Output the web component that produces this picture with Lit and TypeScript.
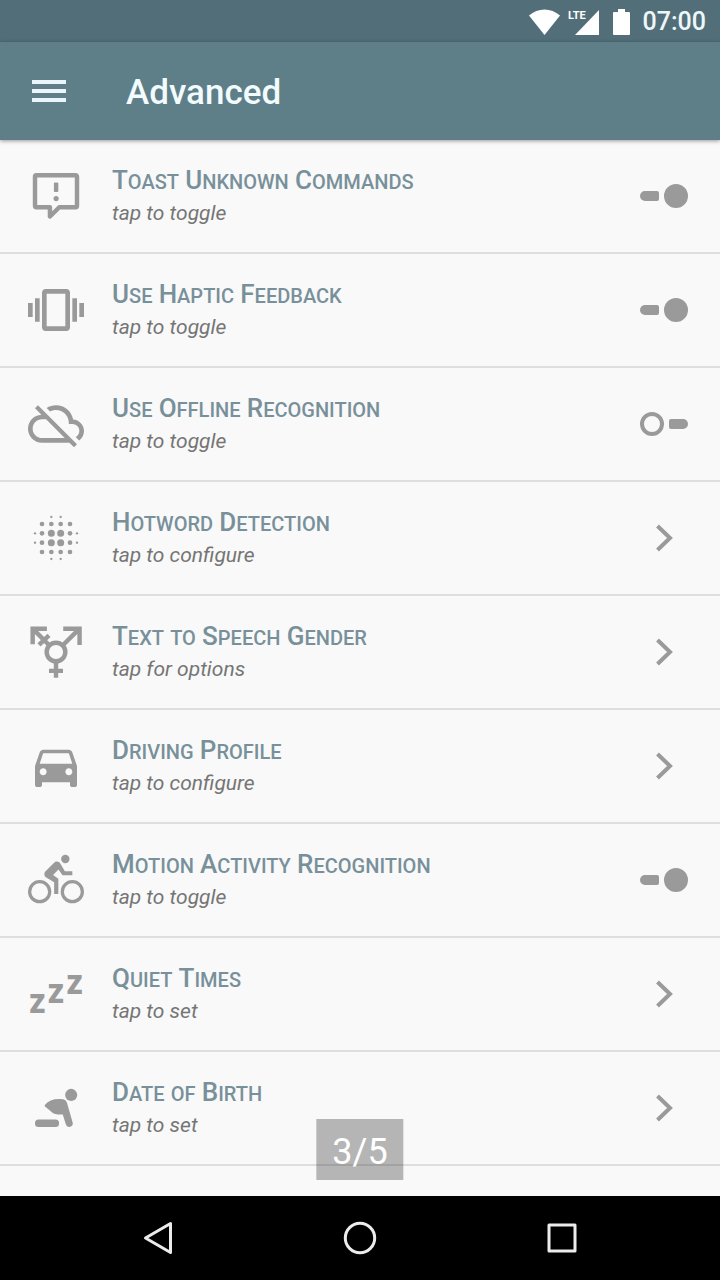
import { LitElement, html, svg, css, nothing } from "lit";
import { customElement, property, state } from "lit/decorators.js";

interface Setting {
  icon: string;
  title: string;
  hint: string;
  on?: boolean;
}

const SETTINGS: Setting[] = [
  { icon: "toast", title: "Toast Unknown Commands", hint: "tap to toggle", on: true },
  { icon: "haptic", title: "Use Haptic Feedback", hint: "tap to toggle", on: true },
  { icon: "offline", title: "Use Offline Recognition", hint: "tap to toggle", on: false },
  { icon: "hotword", title: "Hotword Detection", hint: "tap to configure" },
  { icon: "gender", title: "Text to Speech Gender", hint: "tap for options" },
  { icon: "car", title: "Driving Profile", hint: "tap to configure" },
  { icon: "bike", title: "Motion Activity Recognition", hint: "tap to toggle", on: true },
  { icon: "sleep", title: "Quiet Times", hint: "tap to set" },
  { icon: "baby", title: "Date of Birth", hint: "tap to set" },
];

const dots: [number, number, number][] = [];
for (const x of [6, 10, 14, 18]) {
  for (const y of [6, 10, 14, 18]) {
    const inner = (x === 10 || x === 14) && (y === 10 || y === 14);
    dots.push([x, y, inner ? 1.5 : 1]);
  }
}
for (const a of [10, 14]) {
  for (const b of [3, 21]) {
    dots.push([a, b, 0.5], [b, a, 0.5]);
  }
}

const ICONS: Record<string, unknown> = {
  toast: svg`
    <path fill="none" stroke="currentColor" stroke-width="1.9" stroke-linejoin="round"
      d="M3.6 3.1H20.4a.6.6 0 0 1 .6.6V16.2a.6.6 0 0 1-.6.6H13.4L9.4 20.8V16.8H3.6a.6.6 0 0 1-.6-.6V3.7a.6.6 0 0 1 .6-.6z"/>
    <rect x="11.1" y="6.2" width="1.9" height="4.1" rx=".4"/><circle cx="12.05" cy="13.1" r="1.1"/>`,
  haptic: svg`<path d="M0 15h2V9H0v6zm3 2h2V7H3v10zm19-8v6h2V9h-2zm-3 8h2V7h-2v10zM16.5 3h-9C6.67 3 6 3.67 6 4.5v15c0 .83.67 1.5 1.5 1.5h9c.83 0 1.5-.67 1.5-1.5v-15c0-.83-.67-1.5-1.5-1.5zM16 19H8V5h8v14z"/>`,
  offline: svg`<path d="M19.35 10.04C18.67 6.59 15.64 4 12 4c-1.48 0-2.85.43-4.01 1.17l1.46 1.46C10.21 6.23 11.08 6 12 6c3.04 0 5.5 2.46 5.5 5.5v.5H19c1.66 0 3 1.34 3 3 0 1.13-.64 2.11-1.56 2.62l1.45 1.45C23.16 18.16 24 16.68 24 15c0-2.64-2.05-4.78-4.65-4.96zM3 5.27l2.75 2.74C2.56 8.15 0 10.77 0 14c0 3.31 2.69 6 6 6h11.73l2 2L21 20.73 4.27 4 3 5.27zM7.73 10l8 8H6c-2.21 0-4-1.79-4-4s1.79-4 4-4h1.73z"/>`,
  hotword: dots.map(([x, y, r]) => svg`<circle cx=${x} cy=${y} r=${r}/>`),
  gender: svg`
    <g fill="none" stroke="currentColor" stroke-width="1.9">
      <circle cx="12" cy="12" r="4"/>
      <path d="M8.1 2H2V8.7M2 2L9.2 9.2M9 4.9L4.7 8.9M15.1 2H22.1V9M22.1 2L14.8 9.2M12 16V23M9 20.1H15"/>
    </g>`,
  car: svg`<path d="M18.92 6.01C18.72 5.42 18.16 5 17.5 5h-11c-.66 0-1.21.42-1.42 1.01L3 12v8c0 .55.45 1 1 1h1c.55 0 1-.45 1-1v-1h12v1c0 .55.45 1 1 1h1c.55 0 1-.45 1-1v-8l-2.08-5.99zM6.5 16c-.83 0-1.5-.67-1.5-1.5S5.67 13 6.5 13s1.5.67 1.5 1.5S7.33 16 6.5 16zm11 0c-.83 0-1.5-.67-1.5-1.5s.67-1.5 1.5-1.5 1.5.67 1.5 1.5-.67 1.5-1.5 1.5zM5 11l1.5-4.5h11L19 11H5z"/>`,
  bike: svg`
    <g fill="none" stroke="currentColor" stroke-width="1.4"><circle cx="5" cy="17" r="4.3"/><circle cx="19" cy="17" r="4.3"/></g>
    <path d="M14.8 10H19V8.2H15.8L13.86 4.93C13.57 4.43 13 4.1 12.4 4.1c-.47 0-.9.19-1.2.5L7.5 8.29C7.19 8.6 7 9 7 9.5c0 .63.33 1.16.85 1.47L11.2 13v5H13v-6.5L10.75 9.85 13.07 7.5 14.8 10z"/>
    <circle cx="16" cy="3" r="1.8"/>`,
  sleep: svg`
    <text class="z" x="0.6" y="20">Z</text>
    <text class="z" x="8.6" y="16">Z</text>
    <text class="z" x="16.6" y="12">Z</text>`,
  baby: svg`
    <circle cx="18.5" cy="6.4" r="2.6"/>
    <rect x="3" y="16.9" width="10.3" height="3.2" rx="1.5"/>
    <path d="M7.3 10.6Q9.3 8.1 13.2 8.1C15.4 8.1 16.2 8.3 16.7 9.8L19.1 18.1A1.5 1.5 0 0 1 16.2 19L14.9 14.8H13C11.7 14.8 10.8 14.3 10 13.6L7.3 11.4Q6.9 11 7.3 10.6z"/>`,
};

@customElement("setting-row")
export class SettingRow extends LitElement {
  @property({ attribute: false }) setting!: Setting;
  @state() private checked = false;

  static styles = css`
    :host {
      display: block;
    }
    .row {
      box-sizing: border-box;
      display: flex;
      align-items: center;
      gap: 28px;
      width: 100%;
      min-height: 114px;
      margin: 0;
      padding: 24px 32px 24px 28px;
      border: 0;
      border-bottom: 2px solid #dedede;
      background: none;
      color: #9a9a9a;
      font-family: Roboto, sans-serif;
      text-align: left;
      cursor: pointer;
    }
    .icon {
      flex: none;
      width: 56px;
      height: 56px;
      fill: currentColor;
      overflow: visible;
    }
    .z {
      font-family: "Open Sans", sans-serif;
      font-size: 11px;
      font-weight: 800;
    }
    .text {
      flex: 1;
      min-width: 0;
      display: flex;
      flex-direction: column;
    }
    .title {
      color: #78909a;
      font-size: 25px;
      font-weight: 500;
      line-height: 32px;
      text-transform: uppercase;
    }
    .word {
      font-size: 20px;
      display: inline-block;
    }
    .cap::first-letter {
      font-size: 26px;
    }
    .hint {
      color: #757575;
      font-size: 21px;
      font-style: italic;
      font-weight: 400;
      line-height: 30px;
    }
    .chevron {
      flex: none;
      width: 48px;
      height: 48px;
      fill: none;
      stroke: currentColor;
      stroke-width: 4;
    }
    .switch {
      appearance: none;
      flex: none;
      display: flex;
      align-items: center;
      justify-content: space-between;
      width: 48px;
      height: 24px;
      margin: 0;
      color: inherit;
    }
    .switch::before,
    .switch::after {
      content: "";
      box-sizing: border-box;
      width: 24px;
      height: 24px;
      border: 4px solid currentColor;
      border-radius: 50%;
    }
    .switch::after {
      width: 19px;
      height: 10px;
      border: 0;
      border-radius: 2px 5px 5px 2px;
      background: currentColor;
    }
    .switch:checked {
      flex-direction: row-reverse;
    }
    .switch:checked::before {
      background: currentColor;
    }
    .switch:checked::after {
      border-radius: 5px 2px 2px 5px;
    }
  `;

  willUpdate(changed: Map<string, unknown>) {
    if (changed.has("setting")) this.checked = !!this.setting.on;
  }

  private body() {
    const { icon, title, hint } = this.setting;
    return html`
      <svg class="icon" viewBox="0 0 24 24" aria-hidden="true">${ICONS[icon]}</svg>
      <span class="text">
        <span class="title">${title.split(" ").map(
          (w, i) => html`${i ? " " : nothing}<span class="word ${/^[A-Z]/.test(w) ? "cap" : ""}">${w}</span>`
        )}</span>
        <span class="hint">${hint}</span>
      </span>`;
  }

  render() {
    if (this.setting.on === undefined) {
      return html`<button class="row" type="button">
        ${this.body()}
        <svg class="chevron" viewBox="0 0 48 48" aria-hidden="true"><path d="M17.5 12L30 24L17.5 36"/></svg>
      </button>`;
    }
    return html`<label class="row">
      ${this.body()}
      <input class="switch" type="checkbox" .checked=${this.checked}
        @change=${(e: Event) => (this.checked = (e.target as HTMLInputElement).checked)} />
    </label>`;
  }
}

@customElement("app-root")
export class AppRoot extends LitElement {
  static styles = css`
    :host {
      position: relative;
      display: flex;
      flex-direction: column;
      min-height: 100vh;
      background: #f9f9f9;
      font-family: Roboto, sans-serif;
    }
    .status {
      box-sizing: border-box;
      display: flex;
      align-items: center;
      justify-content: flex-end;
      height: 42px;
      padding: 2px 14px 0;
      background: #526f79;
      color: #eef7f9;
    }
    .status svg {
      height: 26px;
      fill: #fff;
    }
    .wifi {
      width: 31px;
      margin-right: 8px;
    }
    .signal {
      width: 31px;
      margin-right: 14px;
    }
    .battery {
      width: 17px;
      margin-right: 13px;
    }
    .lte {
      font-size: 11px;
      font-weight: 700;
    }
    .time {
      font-size: 25px;
      font-weight: 500;
      line-height: 40px;
    }
    .bar {
      position: relative;
      display: flex;
      align-items: center;
      gap: 60px;
      height: 98px;
      padding: 0 32px;
      background: #5e7e88;
      box-shadow: 0 1px 4px rgba(0, 0, 0, 0.4);
    }
    .menu {
      display: flex;
      flex-direction: column;
      gap: 5px;
      width: 34px;
      margin: 0;
      padding: 0;
      border: 0;
      background: none;
    }
    .line {
      height: 4px;
      background: #eaf6fb;
    }
    .heading {
      margin: 0;
      padding-top: 4px;
      color: #f2fbfd;
      font-size: 35px;
      font-weight: 500;
      line-height: 44px;
    }
    .list {
      flex: 1;
      margin: 0;
      padding: 0;
      list-style: none;
    }
    .nav {
      display: grid;
      grid-template-columns: repeat(3, 1fr);
      height: 84px;
      padding: 0 8%;
      background: #000;
    }
    .key {
      display: grid;
      place-items: center;
      padding: 0;
      border: 0;
      background: none;
    }
    .key svg {
      width: 36px;
      height: 36px;
      fill: none;
      stroke: #ececec;
      stroke-width: 3;
      stroke-linejoin: round;
    }
    .page {
      position: absolute;
      bottom: 100px;
      left: 50%;
      transform: translateX(-50%);
      padding: 11px 16px 5px;
      background: rgba(0, 0, 0, 0.27);
      color: #fff;
      font-size: 36px;
      line-height: 45px;
    }
  `;

  render() {
    return html`
      <div class="status">
        <svg class="wifi" viewBox="0 0 31 26" aria-hidden="true"><path d="M0 6.5C9-1.6 22-1.6 31 6.5L15.5 26z"/></svg>
        <svg class="signal" viewBox="0 0 31 26" aria-label="LTE signal">
          <path d="M31 1V26H7z"/><text class="lte" x="0" y="10">LTE</text>
        </svg>
        <svg class="battery" viewBox="0 0 17 26" aria-hidden="true"><path d="M5 0h7v3h4q1 0 1 1v21q0 1-1 1H1q-1 0-1-1V4q0-1 1-1h4z"/></svg>
        <span class="time">07:00</span>
      </div>
      <header class="bar">
        <button class="menu" type="button" aria-label="Menu">
          <span class="line"></span><span class="line"></span><span class="line"></span>
        </button>
        <h1 class="heading">Advanced</h1>
      </header>
      <ul class="list">
        ${SETTINGS.map((s) => html`<li><setting-row .setting=${s}></setting-row></li>`)}
      </ul>
      <nav class="nav">
        <button class="key" type="button" aria-label="Back">
          <svg viewBox="0 0 36 36"><path d="M30.5 3.5V32.5L5.5 18z"/></svg>
        </button>
        <button class="key" type="button" aria-label="Home">
          <svg viewBox="0 0 36 36"><circle cx="18" cy="18" r="14.7"/></svg>
        </button>
        <button class="key" type="button" aria-label="Recent apps">
          <svg viewBox="0 0 36 36"><rect x="5" y="5" width="26" height="26"/></svg>
        </button>
      </nav>
      <div class="page">3/5</div>
    `;
  }
}
